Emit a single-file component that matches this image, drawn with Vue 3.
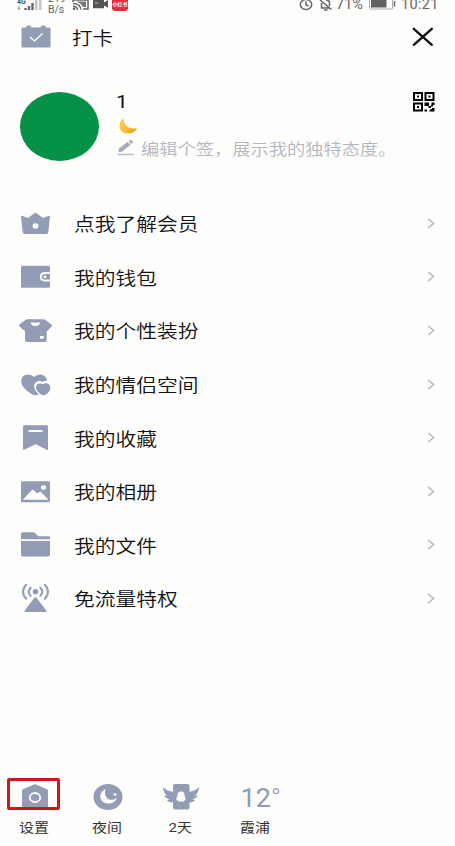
<template>
  <div class="drawer">
    <!-- 状态栏 -->
    <div class="status-bar">
      <svg class="signal" width="26" height="14" viewBox="0 0 26 14">
        <text x="0" y="4" class="net">4G</text>
        <path d="M2 5.500v4M0.500 8L2 9.500l1.500-1.500" class="thin" />
        <path d="M8.500 8v2M12 6v4M15.500 3v7" class="bar" />
        <path d="M19.300 0v10M23.300 0v10" class="bar faint" />
      </svg>
      <div class="speed">
        <span>219</span>
        <span>B/s</span>
      </div>
      <svg class="cast" width="18" height="12" viewBox="0 0 18 12">
        <path d="M1 2V0h15v9h-5" class="line" />
        <path d="M1 3.500q7 0 8 6M1 6.300q4 0 4.500 3.500" class="line" />
        <path d="M5 1.500h9v5.500h-3q-2-4-6-5z" fill="#777" />
        <circle cx="2" cy="8.800" r="1.200" fill="#555" />
      </svg>
      <svg class="video" width="16" height="12" viewBox="0 0 16 12">
        <path d="M0 0h11v2.500L15 0v7.500L11 5.500v2.800H0z" fill="#555" />
        <path d="M2 3h3" stroke="#bbb" />
      </svg>
      <div class="app-badge">小红书</div>
      <div class="status-right">
        <svg width="14" height="12" viewBox="0 0 14 12">
          <ellipse cx="7" cy="4.500" rx="5.700" ry="5" class="line" />
          <path d="M7 1.500v3.300l2.500 1.200" class="line" />
        </svg>
        <svg class="bell" width="14" height="12" viewBox="0 0 14 12">
          <path d="M2.500 8V3M2 8h8.500M10.500 6V2Q9.500 0 7 0M5 10h3.500M1 0l11.500 9.500" class="line" />
        </svg>
        <span class="percent">71%</span>
        <svg class="battery" width="28" height="12" viewBox="0 0 28 12">
          <rect x="0.500" y="-3" width="23" height="12" rx="1" fill="none" stroke="#aaa" />
          <rect x="2" y="-2" width="15.500" height="9.500" fill="#606060" />
          <path d="M25.500 1v5.500" stroke="#666" stroke-width="1.500" />
        </svg>
        <span class="clock">10:21</span>
      </div>
    </div>

    <!-- 打卡 -->
    <div class="top-bar">
      <svg class="calendar" width="30" height="24" viewBox="0 0 30 24">
        <path
          d="M2 2.500h3Q5.200.5 7 .5h1.500q1.800 0 2 2h9q.2-2 2-2H23q1.800 0 2 2h3q1.500 0 1.500 1.500v17q0 1.500-1.500 1.500H2Q.5 22.500.5 21V4Q.5 2.500 2 2.500z"
          fill="#929cb4"
        />
        <path d="M9 12l4.500 4 8-7.500" fill="none" stroke="#fdfdfc" stroke-width="1.500" />
      </svg>
      <span class="top-title">打卡</span>
      <svg class="close" width="22" height="20" viewBox="0 0 22 20">
        <path d="M1.800 1.800l18 16M19.800 1.800l-18 16" />
      </svg>
    </div>

    <!-- 个人信息 -->
    <div class="profile">
      <div class="avatar"></div>
      <div class="info">
        <div class="nickname">1</div>
        <svg class="moon" width="20" height="18" viewBox="0 0 20 18">
          <defs>
            <linearGradient id="moonFill" x1="0" y1="0" x2="1" y2="1">
              <stop offset="0" stop-color="#ffd45a" />
              <stop offset="0.600" stop-color="#fbb92c" />
              <stop offset="1" stop-color="#e08e20" />
            </linearGradient>
          </defs>
          <path d="M6 1C-1 5 .5 15 8.500 16.300c5 .8 9-1.500 10.300-5.300C13 13 4.500 9 6 1z" fill="url(#moonFill)" />
        </svg>
        <div class="signature">
          <svg width="18" height="18" viewBox="0 0 18 18">
            <path d="M1.500 13.300L2 9.500 10.500 3l3 2.800L5.300 12.500zM11.500 2.200l1.200-1q1-.7 2 .2l.9.900q.8.800-.1 1.600l-1.200 1z" fill="#a5aaba" />
            <path d="M1 15.500h16" stroke="#b8bcc8" stroke-width="1.500" />
          </svg>
          <span>编辑个签，展示我的独特态度。</span>
        </div>
      </div>
      <svg class="qrcode" width="22" height="20" viewBox="0 0 22 20">
        <path
          fill-rule="evenodd"
          d="M0 0h10v9H0zM2 2v5h6V2zM11.500 0h10v9h-10zM13.500 2v5h6V2zM0 10.500h10v9H0zM2 12.500v5h6v-5z"
        />
        <path d="M4 3.500h2v2H4zM15.500 3.500h2v2h-2zM4 14h2v2H4zM11.500 10.500H16v3.500h-4.500zM18.500 10.500h3V13h-1.500v1.500H18V13h.5zM15.500 14H18v2h-2.500zM11.500 17.500H14v2h-2.500zM17.500 17H19v-1h2.500v3.500h-5V18h1z" />
      </svg>
    </div>

    <!-- 功能菜单 -->
    <div class="menu">
      <div v-for="item in menuList" :key="item.id" class="menu-item">
        <svg class="menu-icon" width="36" height="32" viewBox="0 0 36 32">
          <g v-if="item.id === 'vip'">
            <path d="M3 8.500q0-1 1-.7l6 2.200 6.700-5q.8-.6 1.600 0L25 10l6-2.200q1-.3 1 .7l-1.700 15.800q-.2 1.700-1.800 1.700h-22q-1.600 0-1.800-1.700z" />
            <ellipse class="hole" cx="17.500" cy="18" rx="3" ry="2.700" />
          </g>
          <g v-else-if="item.id === 'wallet'">
            <rect x="3" y="4.700" width="29" height="22" rx="1.500" />
            <path class="hole" d="M33 11h-6q-5.200.2-5.200 4.700t5.200 4.700h6z" />
            <path d="M32 12.900h-4.500v5.600H32z" />
            <ellipse cx="27" cy="15.700" rx="3.200" ry="2.800" />
            <ellipse class="hole" cx="27" cy="15.700" rx="1.500" ry="1.300" />
          </g>
          <g v-else-if="item.id === 'dress'">
            <path d="M9.500 4.300h16.200q1 0 1.800.6l6.400 5q.6.600 0 1.200l-4 4.300q-.5.400-1.200.2V25q0 2-2 2H9q-2 0-2-2v-9.400q-.8.200-1.300-.3L1.200 11q-.6-.6 0-1.200l6.400-5q.9-.5 1.900-.5z" />
            <path class="hole" d="M12.500 7.500h9.700q-.8 3.500-4.700 3.600t-5-3.600zM22 21h3.800v2.800H22z" />
          </g>
          <g v-else-if="item.id === 'couple'">
            <path d="M17 26.500Q10 24 5 17.500C1 12 4 5.500 10 5.500q4 0 6 2.500 2.500-2.500 6-2.500c3.500 0 7 2.500 7 6.500q-2-.8-4.300 1c-4-2.500-9.500.5-8.500 5.500q.7 3.500 4.500 7z" />
            <path d="M25.500 26.500q-5-2-7-6c-1.800-4 1.500-7.500 6.300-5.300 3-2 7.500-.7 7.500 3.600 0 3.500-3 6.500-6.800 7.700z" />
          </g>
          <g v-else-if="item.id === 'collect'">
            <path d="M6.500 3.200h22.200q1.300 0 1.300 1.300v22.600q0 1.200-1.200.7l-11.200-5.500-11.400 5.500q-1.200.4-1.200-.7V4.500q0-1.300 1.500-1.300z" />
            <path class="hole" d="M10.500 8h14v2h-14z" />
          </g>
          <g v-else-if="item.id === 'album'">
            <rect x="3" y="5.300" width="29" height="21" rx="1.500" />
            <path class="hole" d="M4.800 23.700L14 14q.7-.7 1.500 0l3.800 3.500 2.300-1.500q.8-.5 1.500.1l7.400 7.600z" />
            <ellipse class="hole" cx="25.500" cy="11.500" rx="2.600" ry="2.300" />
          </g>
          <g v-else-if="item.id === 'file'">
            <path d="M4.500 3.300h11q1 0 1.700.7l3 3.300H31q1 0 1 1v2H3V4.800q0-1.500 1.500-1.500zM3 12h29v13.800q0 1.600-1.600 1.600H4.600Q3 27.400 3 25.800z" />
          </g>
          <g v-else>
            <path d="M16.700 14.500q.8-.9 1.600 0l10 13q.8 1.500-1 1.500H7.700q-1.800 0-1-1.500z" />
            <ellipse cx="17.500" cy="8.700" rx="2.800" ry="2.600" />
            <path class="wave" d="M8.200 1.800c-4.200 4-4.200 10 0 14M26.800 1.800c4.200 4 4.200 10 0 14M12.700 4.700q-4 4 0 8.200M22.300 4.700q4 4 0 8.200" />
          </g>
        </svg>
        <span class="menu-name">{{ item.name }}</span>
        <svg class="arrow" width="8" height="12" viewBox="0 0 8 12">
          <path d="M1.200 1L6.500 5.500l-5.300 4.500" />
        </svg>
      </div>
    </div>

    <!-- 底部工具栏 -->
    <div class="footer">
      <div class="tool setting">
        <div class="tool-icon">
          <svg width="30" height="28" viewBox="0 0 30 28">
            <path d="M14 1.600q1-.5 2 0l11 4.700q1 .5 1 1.500V24q0 2-2 2H4q-2 0-2-2V7.800q0-1 1-1.500z" />
            <ellipse cx="15" cy="14.500" rx="5.200" ry="4.500" fill="none" stroke="#fdfdfc" stroke-width="1.800" />
          </svg>
          <div class="highlight"></div>
        </div>
        <span>设置</span>
      </div>
      <div class="tool">
        <div class="tool-icon">
          <svg width="30" height="28" viewBox="0 0 30 28">
            <ellipse cx="15" cy="14" rx="14.500" ry="13" />
            <path class="hole" d="M12.500 6c-8 3.500-6.500 14.500 3 14.500 4.500 0 7.500-2.500 8.500-6-3 3-8 3-10.300.2-2-2.500-2-5.700-1.200-8.700z" />
            <ellipse class="hole" cx="22" cy="11.500" rx="1.500" ry="1.300" />
          </svg>
        </div>
        <span>夜间</span>
      </div>
      <div class="tool">
        <div class="tool-icon">
          <svg width="38" height="28" viewBox="0 0 38 28">
            <rect x="11" y="1" width="16.500" height="25.500" rx="2" />
            <path d="M.8 4Q4 8 12 9v10q-5 1.500-7.300-2 2 0 3-.7-4.500-.8-5.500-4 1.500.6 2.800.3Q1.200 9.500.8 4zM37.200 4Q34 8 26 9v10q5 1.500 7.300-2-2 0-3-.7 4.500-.8 5.500-4-1.500.6-2.800.3 3.800-3.100 4.200-8.600z" />
            <path class="hole" d="M19 8.500c3 0 3.600 2.200 3.700 4.700q1.300 2 1 4.300l-1.200-.5q-.3 1-1 1.500h-5q-.7-.5-1-1.500l-1.200.5q-.3-2.300 1-4.300c.1-2.500.7-4.700 3.700-4.700z" />
          </svg>
        </div>
        <span>2天</span>
      </div>
      <div class="tool weather">
        <div class="tool-icon"><span class="temp">12<b>°</b></span></div>
        <span>霞浦</span>
      </div>
    </div>
  </div>
</template>

<script setup>
import { ref } from 'vue'

// 菜单数据
const menuList = ref([
  { id: 'vip', name: '点我了解会员' },
  { id: 'wallet', name: '我的钱包' },
  { id: 'dress', name: '我的个性装扮' },
  { id: 'couple', name: '我的情侣空间' },
  { id: 'collect', name: '我的收藏' },
  { id: 'album', name: '我的相册' },
  { id: 'file', name: '我的文件' },
  { id: 'flow', name: '免流量特权' },
])
</script>

<style>
body {
  background-color: #fdfdfc;
}
</style>

<style scoped>
.drawer {
  width: 455px;
  height: 846px;
  overflow: hidden;
  display: flex;
  flex-direction: column;
  background-color: #fdfdfc;
  color: #111;
  font-family: Roboto, 'Noto Sans CJK SC', sans-serif;
}

svg {
  display: block;
  flex-shrink: 0;
}

.hole {
  fill: #fdfdfc;
}

/* 状态栏 */
.status-bar {
  height: 16px;
  flex-shrink: 0;
  display: flex;
  align-items: flex-start;
  padding: 0 16px 0 17px;
  color: #666;
}

.line {
  fill: none;
  stroke: #666;
  stroke-width: 1.5;
}

.thin {
  fill: none;
  stroke: #999;
  stroke-width: 1;
}

.bar {
  stroke: #666;
  stroke-width: 2.4;
}

.faint {
  stroke: #c4c4c4;
}

.net {
  font-size: 7px;
  font-weight: bold;
  fill: #555;
}

.speed {
  display: flex;
  flex-direction: column;
  width: 18px;
  margin: -6px 0 0 5px;
  font-size: 10.5px;
  line-height: 10.5px;
}

.speed span {
  white-space: nowrap;
}

.cast {
  margin-left: 6px;
}

.video {
  margin-left: 3px;
}

.app-badge {
  width: 16px;
  height: 14px;
  margin: -3px 0 0 3px;
  border-radius: 3px;
  background-color: #e32e3c;
  color: #fff;
  font-size: 5px;
  font-weight: bold;
  line-height: 15px;
  text-align: center;
  white-space: nowrap;
}

.status-right {
  display: flex;
  margin-left: auto;
  font-size: 14.5px;
  line-height: 16px;
}

.bell {
  margin-left: 6px;
}

.percent {
  width: 28px;
  margin: -3px 0 0 3px;
}

.battery {
  margin-left: 5px;
}

.clock {
  width: 38px;
  margin: -3px 0 0 4px;
  letter-spacing: 0.3px;
}

/* 顶部 */
.top-bar {
  height: 42px;
  flex-shrink: 0;
  display: flex;
  align-items: center;
  padding: 0 21px;
}

.top-title {
  margin-left: 21px;
  font-size: 18px;
  font-weight: 350;
  font-family: 'Noto Sans CJK SC', sans-serif;
  line-height: 26px;
  padding-bottom: 1px;
  transform: scaleX(1.14);
  transform-origin: left;
}

.close {
  margin-left: auto;
}

.close path {
  fill: none;
  stroke: #111;
  stroke-width: 2.4;
  stroke-linecap: round;
}

/* 个人信息 */
.profile {
  height: 104px;
  flex-shrink: 0;
  margin-top: 34px;
  padding: 0 20px 0 19.5px;
  display: flex;
  align-items: flex-start;
}

.avatar {
  width: 79px;
  height: 69px;
  border-radius: 50%;
  background-color: #059247;
}

.info {
  margin-left: 18.5px;
}

.nickname {
  height: 18px;
  font-size: 19px;
  line-height: 19px;
  transform: scaleX(1.1) translateX(-1px);
  transform-origin: left;
}

.moon {
  margin: 7px 0 0 1px;
}

.signature {
  display: flex;
  align-items: center;
  height: 22px;
  margin-top: 2px;
  color: #b3b6c1;
  font-size: 16px;
  font-weight: 350;
  font-family: 'Noto Sans CJK SC', sans-serif;
  white-space: nowrap;
}

.signature span {
  margin-left: 6px;
  transform: scaleX(1.14);
  transform-origin: left;
}

.qrcode {
  margin-left: auto;
}

/* 菜单 */
.menu {
  margin-top: 1px;
  display: flex;
  flex-direction: column;
}

.menu-item {
  height: 53.6px;
  display: flex;
  align-items: center;
  padding: 0 20px 0 18px;
}

.menu-icon {
  fill: #929cb4;
}

.wave {
  fill: none;
  stroke: #929cb4;
  stroke-width: 2;
  stroke-linecap: round;
}

.menu-name {
  margin-left: 19.5px;
  padding-bottom: 1px;
  font-size: 18.2px;
  font-weight: 350;
  font-family: 'Noto Sans CJK SC', sans-serif;
  line-height: 26px;
  transform: scaleX(1.14);
  transform-origin: left;
}

.arrow {
  margin-left: auto;
}

.arrow path {
  fill: none;
  stroke: #b5b7be;
  stroke-width: 1.5;
}

/* 底部 */
.footer {
  margin-top: auto;
  height: 63px;
  flex-shrink: 0;
  display: flex;
}

.tool {
  width: 73px;
  display: flex;
  flex-direction: column;
  align-items: center;
  font-size: 13px;
  line-height: 18px;
  color: #333;
}

.tool:first-child {
  width: 69px;
  margin-right: 2px;
}

.tool > span {
  margin-top: 8px;
  transform: scaleX(1.15);
}

.tool-icon {
  position: relative;
  height: 28px;
  display: flex;
  align-items: center;
  fill: #929cb4;
}

.highlight {
  position: absolute;
  left: -13px;
  top: -5px;
  width: 47px;
  height: 26px;
  border: 3px solid #d0161c;
  border-radius: 2px;
}

.weather {
  width: 76px;
}

.temp {
  margin: 3px 0 0 11px;
  font-size: 25px;
  line-height: 28px;
  color: #929cb4;
  white-space: nowrap;
  transform: scaleX(1.08);
}

.temp b {
  font-weight: 300;
}
</style>
